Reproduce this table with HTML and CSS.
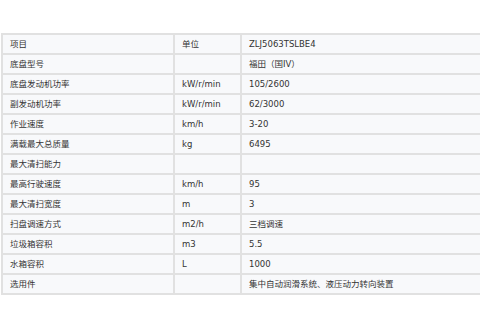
FILE: index.html
```
<html lang="en">
<head>
  <meta charset="UTF-8">
  <meta name="viewport" content="width=device-width, initial-scale=1.0">
  <title>参数</title>
  <link rel="stylesheet" href="styles.css">
</head>
<body>
  <div class="wrap">
    <table class="spec">
      <colgroup>
        <col class="c-name">
        <col class="c-unit">
        <col class="c-val">
      </colgroup>
      <tr><td>项目</td><td>单位</td><td>ZLJ5063TSLBE4</td></tr>
      <tr><td>底盘型号</td><td></td><td>福田（国IV）</td></tr>
      <tr><td>底盘发动机功率</td><td>kW/r/min</td><td>105/2600</td></tr>
      <tr><td>副发动机功率</td><td>kW/r/min</td><td>62/3000</td></tr>
      <tr><td>作业速度</td><td>km/h</td><td>3-20</td></tr>
      <tr><td>满载最大总质量</td><td>kg</td><td>6495</td></tr>
      <tr><td>最大清扫能力</td><td></td><td></td></tr>
      <tr><td>最高行驶速度</td><td>km/h</td><td>95</td></tr>
      <tr><td>最大清扫宽度</td><td>m</td><td>3</td></tr>
      <tr><td>扫盘调速方式</td><td>m2/h</td><td>三档调速</td></tr>
      <tr><td>垃圾箱容积</td><td>m3</td><td>5.5</td></tr>
      <tr><td>水箱容积</td><td>L</td><td>1000</td></tr>
      <tr><td>选用件</td><td></td><td>集中自动润滑系统、液压动力转向装置</td></tr>
    </table>
  </div>
</body>
</html>
```

FILE: styles.css
```
* {
  padding: 0;
  margin: 0;
  box-sizing: border-box;
}
body {
  background: #fff;
  overflow: hidden;
}
.wrap {
  width: 480px;
  padding: 33px 0 0 1px;
  overflow: hidden;
}
.spec {
  width: 500px;
  border-collapse: collapse;
  table-layout: fixed;
  font-family: "DejaVu Sans", "Noto Sans CJK SC", sans-serif;
  font-size: 8.5px;
  color: #333;
}
.c-name {
  width: 172px;
}
.c-unit {
  width: 67px;
}
.spec td {
  height: 20px;
  padding: 0 7px;
  line-height: 18px;
  background: #f8f9fb;
  border: 2px solid #e1e1e1;
  white-space: nowrap;
}
```
